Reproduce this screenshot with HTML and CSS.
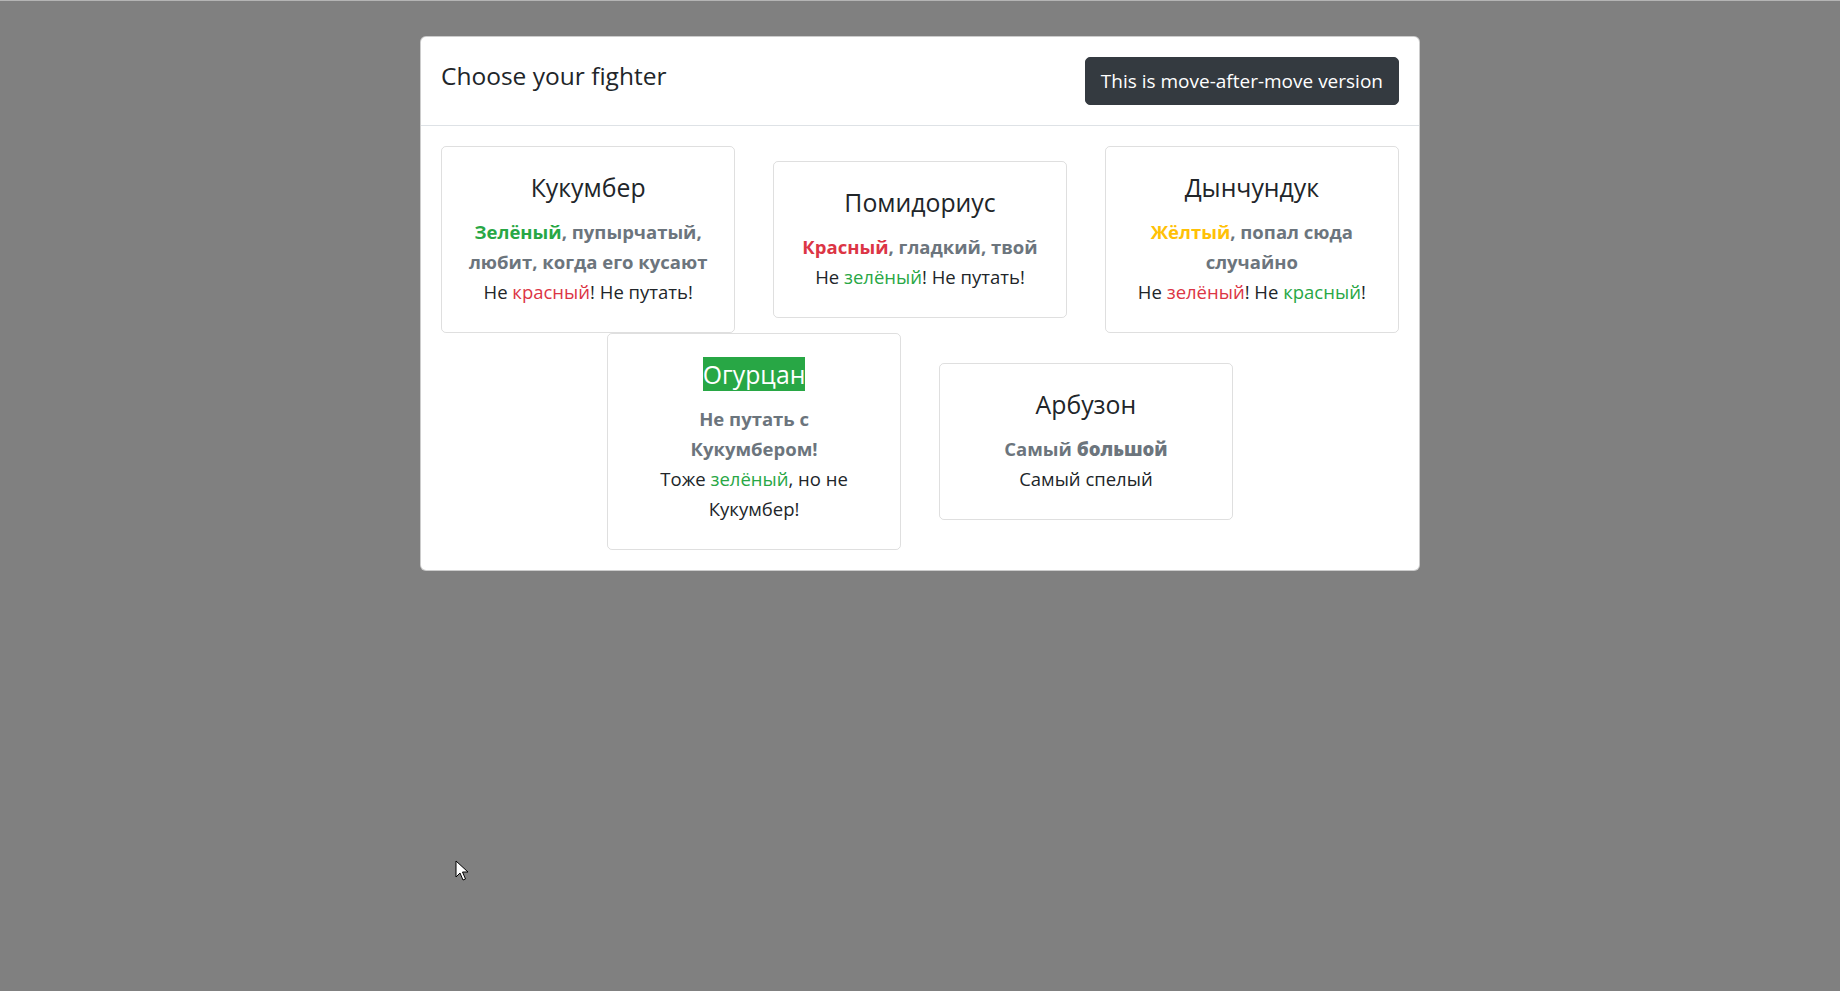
FILE: index.html
```html
<!DOCTYPE html>
<html lang="ru">
<head>
<meta charset="utf-8">
<title>Choose your fighter</title>
<link rel="stylesheet" href="styles.css">
</head>
<body>
<div class="dialog">
  <div class="modal">
    <div class="modal-header">
      <h5 class="modal-title">Choose your fighter</h5>
      <button class="btn-dark" type="button">This is move-after-move version</button>
    </div>
    <div class="modal-body">
      <div class="row">
        <div class="col">
          <div class="card">
            <h5 class="card-title">Кукумбер</h5>
            <p class="card-sub"><span class="green">Зелёный</span>, пупырчатый, любит, когда его кусают</p>
            <p class="card-text">Не <span class="red">красный</span>! Не путать!</p>
          </div>
        </div>
        <div class="col">
          <div class="card">
            <h5 class="card-title">Помидориус</h5>
            <p class="card-sub"><span class="red">Красный</span>, гладкий, твой</p>
            <p class="card-text">Не <span class="green">зелёный</span>! Не путать!</p>
          </div>
        </div>
        <div class="col">
          <div class="card">
            <h5 class="card-title">Дынчундук</h5>
            <p class="card-sub"><span class="yellow">Жёлтый</span>, попал сюда случайно</p>
            <p class="card-text">Не <span class="red">зелёный</span>! Не <span class="green">красный</span>!</p>
          </div>
        </div>
        <div class="col">
          <div class="card">
            <h5 class="card-title"><span class="bg-success">Огурцан</span></h5>
            <p class="card-sub">Не путать с<br>Кукумбером!</p>
            <p class="card-text">Тоже <span class="green">зелёный</span>, но не Кукумбер!</p>
          </div>
        </div>
        <div class="col">
          <div class="card">
            <h5 class="card-title">Арбузон</h5>
            <p class="card-sub">Самый <b class="heavy">большой</b></p>
            <p class="card-text">Самый спелый</p>
          </div>
        </div>
      </div>
    </div>
  </div>
</div>
<svg class="cursor" width="14" height="22" viewBox="0 0 14 22" aria-hidden="true">
  <path d="M1 1 L1 17 L5 13 L8 20 L10.5 19 L7.5 12 L13 12 Z" fill="#fff" stroke="#000" stroke-width="1" stroke-linejoin="miter"/>
</svg>
</body>
</html>
```
FILE: styles.css
```css
html, body {
  margin: 0;
  padding: 0;
}
body {
  background: #808080;
  min-height: 100vh;
  box-shadow: inset 0 1px 0 #b4b4b4;
  font-family: "Open Sans", "Noto Sans", sans-serif;
  font-size: 18.5px;
  line-height: 30px;
  color: #212529;
}
.dialog {
  width: 1000px;
  margin: 36px auto 0;
}
.modal {
  background: #fff;
  border: 1px solid rgba(0, 0, 0, 0.2);
  border-radius: 6px;
  box-sizing: border-box;
}
.modal-header {
  display: flex;
  justify-content: space-between;
  align-items: flex-start;
  padding: 20px;
  border-bottom: 1px solid #dee2e6;
}
.modal-title {
  margin: 0;
  font-size: 24.5px;
  font-weight: 400;
  line-height: 37.5px;
}
.btn-dark {
  font-family: inherit;
  font-size: 19px;
  line-height: 30px;
  color: #fff;
  background: #343a40;
  border: 1px solid #343a40;
  border-radius: 5px;
  padding: 7.5px 15px 8px;
  cursor: pointer;
}
.modal-body {
  padding: 20px;
}
.row {
  display: flex;
  flex-wrap: wrap;
  justify-content: center;
  align-items: center;
  margin: 0 -18.75px;
}
.col {
  width: 33.3333%;
  padding: 0 18.75px;
  box-sizing: border-box;
}
.card {
  border: 1px solid rgba(0, 0, 0, 0.125);
  border-radius: 5px;
  padding: 25px;
  text-align: center;
}
.card-title {
  margin: 0 0 15px;
  font-size: 24.8px;
  font-weight: 400;
  line-height: 30px;
}
.card-sub {
  margin: 0;
  font-weight: 700;
  color: #6c757d;
}
.card-text {
  margin: 0;
}
.green { color: #28a745; }
.red { color: #dc3545; }
.yellow { color: #ffc107; }
.bg-success {
  background: #28a745;
  color: #fff;
}
.heavy {
  font-weight: 800;
}
.cursor {
  position: absolute;
  left: 455px;
  top: 860px;
}
```
